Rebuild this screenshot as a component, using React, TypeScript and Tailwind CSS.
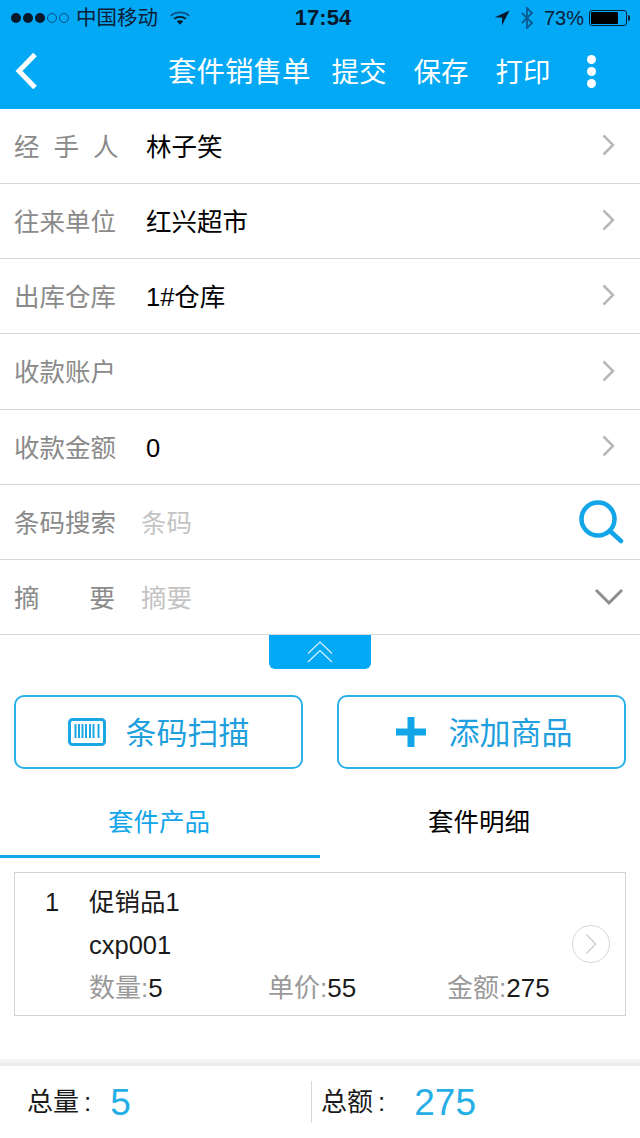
import { ReactNode } from "react";

const font = { fontFamily: '"Liberation Sans", "Noto Sans CJK SC", sans-serif' };

function Chevron() {
  return (
    <svg width="14" height="24" viewBox="0 0 14 24" fill="none" className="mb-[4px] shrink-0">
      <path d="M2.500 2.500L12 12l-9.500 9.500" stroke="#b8b8b8" strokeWidth="2.500" />
    </svg>
  );
}

function Row({ label, children, icon }: { label: ReactNode; children?: ReactNode; icon?: ReactNode }) {
  return (
    <div className="flex h-[75.170px] items-center border-b border-[#d8d8d8] pl-[14px] pr-[25px] pt-[2px]">
      <div className="w-[132px] shrink-0 text-[25.500px] text-[#8a8a8a]">{label}</div>
      <div className="flex-1 text-[25.500px] text-black">{children}</div>
      {icon ?? <Chevron />}
    </div>
  );
}

function StatusBar() {
  return (
    <div className="flex h-[36px] items-center justify-between pl-[11px] pr-[10px] text-[#0a2036]">
      <div className="flex w-[235px] items-center">
        <span className="flex items-center gap-[2px]">
          <i className="block size-[10px] rounded-full bg-[#07182a]" />
          <i className="block size-[10px] rounded-full bg-[#07182a]" />
          <i className="block size-[10px] rounded-full bg-[#07182a]" />
          <i className="block size-[10px] rounded-full border border-[#0a4f80]" />
          <i className="block size-[10px] rounded-full border border-[#0a4f80]" />
        </span>
        <span className="ml-[7px] text-[20.500px] leading-none">中国移动</span>
        <svg width="20" height="16" viewBox="0 0 22 16" fill="none" className="ml-[12px]">
          <path d="M1 5.500c5.500-5 14.500-5 20 0" stroke="#0a4f80" strokeWidth="2" />
          <path d="M4.500 9c3.500-3 9.500-3 13 0" stroke="#07182a" strokeWidth="2" />
          <path d="M11 15.500L7.500 11.500c2-1.500 5-1.500 7 0z" fill="#07182a" />
        </svg>
      </div>
      <span className="text-[22px] font-bold leading-none text-[#07182a]">17:54</span>
      <div className="flex w-[230px] items-center justify-end">
        <svg width="16" height="16" viewBox="0 0 16 16">
          <path d="M15.500 0.500L0.500 7.500h7.500v8z" fill="#07182a" />
        </svg>
        <svg width="14" height="22" viewBox="0 0 14 22" fill="none" className="ml-[10px]">
          <path d="M2 6l10 10-5 5V1l5 5L2 16" stroke="#0a5a90" strokeWidth="1.800" />
        </svg>
        <span className="ml-[10px] text-[20px] leading-none">73%</span>
        <div className="ml-[5px] flex h-[16px] w-[38px] rounded-[3px] border border-[#0a2036] p-[1px]">
          <div className="h-full w-[27px] rounded-[1px] bg-black" />
        </div>
        <div className="ml-[1px] h-[6px] w-[2px] rounded-r-sm bg-[#0a2036]" />
      </div>
    </div>
  );
}

function Header() {
  return (
    <div className="h-[109px] bg-[#03a9f4]">
      <StatusBar />
      <div className="flex h-[73px] items-center pl-[15px] text-[27.500px] text-white">
        <svg width="22" height="38" viewBox="0 0 22 38" fill="none" className="mb-[3px]">
          <path d="M20 2.500L4 19l16 16.500" stroke="#fff" strokeWidth="5" />
        </svg>
        <span className="ml-[131px] text-[28.500px]">套件销售单</span>
        <span className="ml-[21px]">提交</span>
        <span className="ml-[27px]">保存</span>
        <span className="ml-[27px]">打印</span>
        <div className="mb-[3px] ml-[36px] flex flex-col gap-[3px]">
          <i className="block size-[9px] rounded-full bg-white" />
          <i className="block size-[9px] rounded-full bg-white" />
          <i className="block size-[9px] rounded-full bg-white" />
        </div>
      </div>
    </div>
  );
}

function BarcodeIcon() {
  return (
    <svg width="38" height="28" viewBox="0 0 38 28" fill="none">
      <rect x="1.500" y="1.500" width="35" height="25" rx="3" stroke="#1ba6e4" strokeWidth="3" />
      <path d="M7.500 6v14M11 6v14M14.500 6v14M18 6v14M22 6v14M25.500 6v14M30.500 6v14" stroke="#1ba6e4" strokeWidth="2" />
    </svg>
  );
}

function ActionButton({ icon, text }: { icon: ReactNode; text: string }) {
  return (
    <div className="flex h-[74px] w-[289px] items-center justify-center gap-[20px] rounded-[10px] border-2 border-[#2bb0e8] text-[31px] text-[#1f9fdd]">
      {icon}
      <span className="pt-[4px]">{text}</span>
    </div>
  );
}

export default function App() {
  return (
    <div className="flex h-[1138px] w-[640px] flex-col overflow-hidden bg-white" style={font}>
      <Header />
      <Row label={<span className="tracking-[14px]">经手人</span>}>林子笑</Row>
      <Row label="往来单位">红兴超市</Row>
      <Row label="出库仓库">1#仓库</Row>
      <Row label="收款账户" />
      <Row label="收款金额">0</Row>
      <div className="flex h-[75.170px] items-center border-b border-[#d8d8d8] pl-[14px] pr-[16px]">
        <div className="w-[127px] shrink-0 pt-[2px] text-[25.500px] text-[#8a8a8a]">条码搜索</div>
        <div className="flex-1 pt-[2px] text-[25.500px] text-[#c4c4c4]">条码</div>
        <svg width="46" height="46" viewBox="0 0 46 46" fill="none">
          <circle cx="20" cy="20" r="16.500" stroke="#12a5e8" strokeWidth="4.500" />
          <path d="M32 32l11 10" stroke="#12a5e8" strokeWidth="4.500" strokeLinecap="round" />
        </svg>
      </div>
      <div className="flex h-[75.170px] items-center border-b border-[#d8d8d8] pl-[14px] pr-[16px]">
        <div className="flex w-[127px] shrink-0 justify-between pr-[26px] pt-[2px] text-[25.500px] text-[#8a8a8a]">
          <span>摘</span>
          <span>要</span>
        </div>
        <div className="flex-1 pt-[2px] text-[25.500px] text-[#c4c4c4]">摘要</div>
        <svg width="30" height="18" viewBox="0 0 30 18" fill="none">
          <path d="M2 2l13 13L28 2" stroke="#8e8e8e" strokeWidth="3" />
        </svg>
      </div>
      <div className="flex justify-center">
        <div className="flex h-[34px] w-[102px] items-center justify-center rounded-b-[6px] bg-[#03a9f4]">
          <svg width="26" height="22" viewBox="0 0 26 22" fill="none">
            <path d="M1 12.500L13 1l12 11.500M1 21L13 9.500 25 21" stroke="#d8f3ff" strokeWidth="1.200" />
          </svg>
        </div>
      </div>
      <div className="mt-[26px] flex justify-between px-[14px]">
        <ActionButton icon={<BarcodeIcon />} text="条码扫描" />
        <ActionButton
          icon={
            <svg width="30" height="30" viewBox="0 0 30 30" className="ml-[5px] mr-[3px]">
              <path d="M11.500 0h7v11.500H30v7H18.500V30h-7V18.500H0v-7h11.500z" fill="#12a5e8" />
            </svg>
          }
          text="添加商品"
        />
      </div>
      <div className="mt-[22px] flex h-[67px] text-[25.500px]">
        <div className="flex w-[320px] items-center justify-center border-b-[3px] border-[#12a5e8] pb-[2px] pr-[2px] text-[#12a5e8]">
          套件产品
        </div>
        <div className="flex w-[320px] items-center justify-center pb-[5px] pr-[2px] text-black">套件明细</div>
      </div>
      <div className="mx-[14px] mt-[14px] flex h-[144px] border border-[#d4d4d4] pl-[30px] pr-[15px] text-[25.500px] text-[#1a1a1a]">
        <div className="w-[44px] pt-[13px] leading-[32px]">1</div>
        <div className="flex-1 pt-[13px] leading-[32px]">
          <div>促销品1</div>
          <div className="mt-[11px]">cxp001</div>
          <div className="mt-[11px] grid grid-cols-[179px_179px_1fr] text-[26px]">
            <div>
              <span className="text-[#999]">数量:</span>5
            </div>
            <div>
              <span className="text-[#999]">单价:</span>55
            </div>
            <div>
              <span className="text-[#999]">金额:</span>275
            </div>
          </div>
        </div>
        <div className="flex items-center">
          <div className="flex size-[38px] items-center justify-center rounded-full border border-[#d6d6d6]">
            <svg width="12" height="22" viewBox="0 0 12 22" fill="none">
              <path d="M1.500 1.500L10.500 11l-9 9.500" stroke="#d0d0d0" strokeWidth="1.500" />
            </svg>
          </div>
        </div>
      </div>
      <div className="mt-[43px] h-[7px] bg-gradient-to-b from-[#f8f8f8] to-[#e8e8e8]" />
      <div className="flex h-[72px] items-center pl-[27px] text-[26px] text-[#1a1a1a]">
        <div className="flex w-[284px] items-center">
          <span>总量</span>
          <span className="ml-[5px]">:</span>
          <span className="ml-[19px] mt-[2px] text-[37px] text-[#26aee6]">5</span>
        </div>
        <div className="h-[42px] border-l border-[#d8d8d8]" />
        <div className="ml-[9px] flex items-center">
          <span>总额</span>
          <span className="ml-[5px]">:</span>
          <span className="ml-[29px] mt-[2px] text-[37px] text-[#26aee6]">275</span>
        </div>
      </div>
    </div>
  );
}
